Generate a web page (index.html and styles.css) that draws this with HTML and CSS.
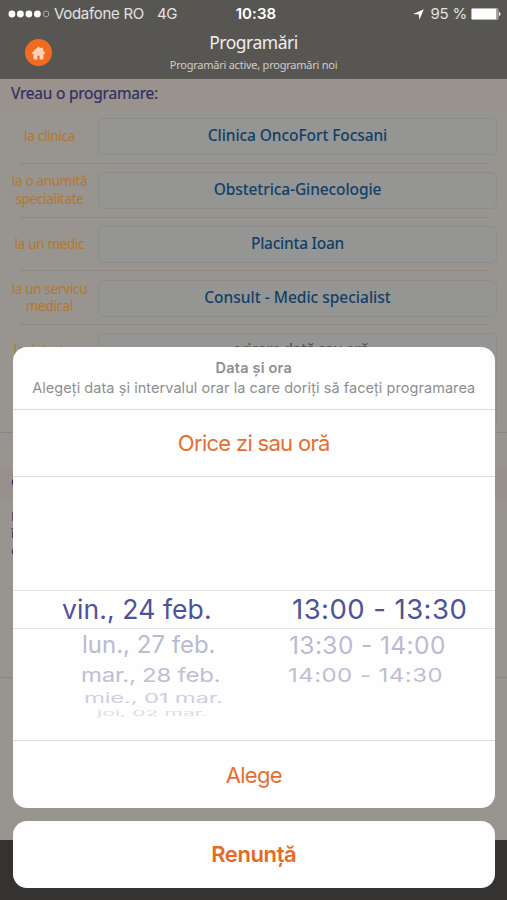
FILE: index.html
```html
<!DOCTYPE html>
<html lang="ro">
<head>
<meta charset="utf-8">
<title>Programări</title>
<link rel="stylesheet" href="styles.css">
</head>
<body>
<div class="screen">
  <header class="top">
    <div class="status">
      <div class="status-left">
        <svg class="signal" width="42" height="8" viewBox="0 0 42 8"><g fill="#fff"><circle cx="3.9" cy="4" r="3.4"/><circle cx="12.4" cy="4" r="3.4"/><circle cx="20.9" cy="4" r="3.4"/><circle cx="29.4" cy="4" r="3.4"/></g><circle cx="38.1" cy="4" r="2.9" fill="none" stroke="#aaa7a4" stroke-width="1"/></svg>
        <span class="carrier">Vodafone RO</span><span class="network">4G</span>
      </div>
      <span class="clock">10:38</span>
      <div class="status-right">
        <svg width="11" height="11" viewBox="0 0 11 11"><path d="M10.8.2 6.4 10.8 5.8 5.4.2 5Z" fill="#fff"/></svg>
        <span class="percent">95 %</span>
        <svg class="battery" width="30" height="12" viewBox="0 0 30 12"><rect x=".4" y=".4" width="26.6" height="11.2" rx="1.6" fill="#777471" stroke="#d8d6d4" stroke-width=".8"/><rect x="1" y="1" width="24.4" height="10" rx=".8" fill="#fff"/><path d="M28 4c1.9.5 1.9 3.5 0 4Z" fill="#fff"/></svg>
      </div>
    </div>
    <div class="nav">
      <div class="home"><svg width="15" height="14" viewBox="0 0 14 14"><path d="M7 .4 9.3 2.5V1.7h2.2v2.8L13.9 6.9 13.1 7.9H12v4.5q0 1-1 1H8.2v-2.7a1.2 1.2 0 0 0-2.4 0v2.7H3q-1 0-1-1V7.9H.9L.1 6.9Z" fill="#ffd2b8"/></svg></div>
      <div class="titles"><h1>Programări</h1><p>Programări active, programări noi</p></div>
    </div>
  </header>
  <main>
    <h2>Vreau o programare:</h2>
    <div class="row"><label>la clinica</label><div class="field"><span class="f1">Clinica OncoFort Focsani</span></div></div>
    <div class="row"><label>la o anumită<br>specialitate</label><div class="field"><span class="f2">Obstetrica-Ginecologie</span></div></div>
    <div class="row"><label>la un medic</label><div class="field"><span class="f3">Placinta Ioan</span></div></div>
    <div class="row"><label class="l4">la un servicu<br>medical</label><div class="field"><span class="f4">Consult - Medic specialist</span></div></div>
    <div class="row last"><label>la data / ora</label><div class="field when">oricare dată sau oră</div></div>
    <section class="contact">
      <h3>Contact</h3>
      <p>Programare<br>în clinica<br>dorită</p>
    </section>
  </main>
  <footer></footer>
</div>
<div class="overlay">
  <div class="sheet">
    <div class="sheet-head"><strong>Data și ora</strong><p>Alegeți data și intervalul orar la care doriți să faceți programarea</p></div>
    <div class="action any"><span>Orice zi sau oră</span></div>
    <div class="wheel">
      <div class="blank"></div>
      <div class="pick selected"><span class="d0">vin., 24 feb.</span><span class="t0">13:00 - 13:30</span></div>
      <div class="pick p1"><span class="d1">lun., 27 feb.</span><span class="t1">13:30 - 14:00</span></div>
      <div class="pick p2"><span class="d2">mar., 28 feb.</span><span class="t2">14:00 - 14:30</span></div>
      <div class="pick p3"><span class="d3">mie., 01 mar.</span></div>
      <div class="pick p4"><span class="d4">joi, 02 mar.</span></div>
    </div>
    <div class="action choose"><span>Alege</span></div>
  </div>
  <div class="cancel"><span>Renunță</span></div>
</div>
</body>
</html>
```

FILE: styles.css
```css
* { box-sizing: border-box; margin: 0; padding: 0; }
body { width: 507px; height: 900px; overflow: hidden; position: relative; background: #97928e; font-family: "Noto Sans", sans-serif; }
.screen { height: 900px; display: flex; flex-direction: column; }
.top { height: 79px; background: #585653; color: #eeedec; flex: none; }
.status { height: 28px; padding: 0 6px 0 8px; display: grid; grid-template-columns: 1fr auto 1fr; align-items: center; font: 15px/28px Inter, sans-serif; color: #e4e2e0; }
.status-left, .status-right { display: flex; align-items: center; }
.status-right { justify-content: flex-end; }
.carrier { margin-left: 4px; letter-spacing: -.3px; }
.network { margin-left: 13px; letter-spacing: -.3px; }
.clock { font-weight: 600; color: #fff; letter-spacing: .1px; padding-left: 3px; }
.percent { margin: 0 4px 0 6px; letter-spacing: -.2px; }
.nav { display: grid; grid-template-columns: 79px 1fr 79px; height: 51px; }
.home { width: 27px; height: 27px; border-radius: 50%; background: #f26b21; margin: 11px 0 0 25px; display: flex; align-items: center; justify-content: center; }
.titles { text-align: center; white-space: nowrap; }
h1 { font-size: 17.5px; line-height: 28px; font-weight: 400; letter-spacing: -.5px; }
.titles p { font-size: 11px; line-height: 18px; color: #cfccca; letter-spacing: -.24px; }
main { flex: 1; background: #98948f; }
h2 { height: 31px; padding: 0 11px; font-size: 15.5px; line-height: 29px; font-weight: 400; color: #2f2f62; -webkit-text-stroke: .2px #2f2f62; background: #9a928c; letter-spacing: -.22px; }
.row { height: 53.8px; display: grid; grid-template-columns: 98px 399px; align-items: center; background: linear-gradient(#8f8883, #8f8883) 19px 100% / 469px 1px no-repeat; }
.row label { font-size: 13.5px; line-height: 17.5px; letter-spacing: -.3px; text-align: center; color: #b5782b; white-space: nowrap; padding-left: 1px; }
.field { height: 37px; border: 1px solid #8d8d8c; border-radius: 6px; background: #959594; color: #123f66; display: flex; align-items: center; justify-content: center; font-size: 15.5px; font-weight: 500; padding-bottom: 3px; white-space: nowrap; }
.f1 { letter-spacing: -.08px; }
.f2 { letter-spacing: -.1px; }
.f3 { letter-spacing: -.25px; }
.last { height: 107.8px; align-items: start; padding-top: 8px; background-image: linear-gradient(#8b8683, #8b8683); background-position: 0 100%; background-size: 507px 1px; }
.last label { padding-top: 9px; }
.last .field { height: 93px; align-items: start; padding: 4px 0 0 6px; color: #555658; letter-spacing: -.6px; }
.contact { margin-top: 35px; }
.contact h3 { height: 33px; padding-left: 11px; font-size: 15px; line-height: 26px; color: #28285f; background: #98908a; }
.contact p { padding: 7px 11px 0; font-size: 13px; line-height: 17px; color: #30305f; height: 177px; border-bottom: 1px solid #8b8683; }
footer { height: 60px; background: #353331; }
.overlay { position: absolute; inset: 347px 12.5px auto 13px; }
.sheet, .cancel { background: #fefefe; border-radius: 14px; font-family: Inter, sans-serif; }
.sheet { height: 461px; overflow: hidden; display: flex; flex-direction: column; }
.sheet-head { height: 63px; border-bottom: 1.5px solid #dcdcdc; padding-top: 11px; text-align: center; color: #8e8e8e; white-space: nowrap; }
.sheet-head strong { display: block; font-size: 14.5px; line-height: 20px; font-weight: 600; letter-spacing: .2px; }
.sheet-head p { font-size: 14.5px; line-height: 20px; letter-spacing: .06px; }
.action { display: flex; align-items: center; justify-content: center; color: #e56f2e; font-size: 22px; letter-spacing: -.7px; }
.any { height: 67px; border-bottom: 1.5px solid #dcdcdc; }
.wheel { height: 264px; border-bottom: 1.5px solid #dcdcdc; color: #4d5398; }
.blank { height: 113px; }
.pick { display: grid; grid-template-columns: 245px 1fr; white-space: nowrap; align-items: center; }
.pick span { justify-self: start; transform-origin: 0 50%; }
.selected { height: 38.5px; line-height: 36px; border: 1.5px solid #e5e5e5; border-width: 1.5px 0; font-size: 26.5px; }
.p1 { height: 32px; line-height: 32px; font-size: 24px; color: #bbbad2; }
.p2 { height: 29px; line-height: 29px; font-size: 24px; color: #bfbed4; }
.p3 { height: 18px; line-height: 18px; font-size: 24px; color: #cfcedf; }
.p4 { height: 11px; line-height: 11px; font-size: 21px; color: #dddde7; }
.d0 { margin-left: 49px; letter-spacing: .1px; } .t0 { margin-left: 34px; font-size: 27.5px; letter-spacing: .45px; }
.d1 { margin-left: 69px; } .t1 { margin-left: 31px; font-size: 24.5px; letter-spacing: .4px; }
.d2 { margin-left: 68px; letter-spacing: -.25px; transform: scaleY(.8); } .t2 { margin-left: 30px; letter-spacing: .45px; transform: scaleY(.8); }
.d3 { margin-left: 71px; letter-spacing: -.25px; transform: scaleY(.55); }
.d4 { margin-left: 84px; letter-spacing: .1px; transform: scaleY(.35); }
.choose { flex: 1; }
.cancel { margin-top: 12.5px; height: 67px; display: flex; align-items: center; justify-content: center; color: #e56a25; font-size: 22px; font-weight: 600; letter-spacing: -.4px; }
```
